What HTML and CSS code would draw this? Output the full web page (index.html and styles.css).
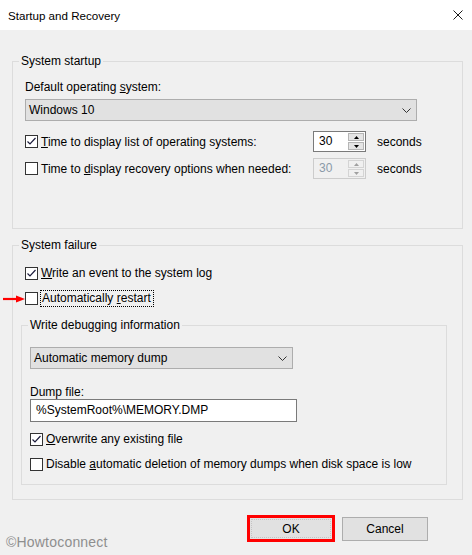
FILE: index.html
```html
<!DOCTYPE html>
<html>
<head>
<meta charset="utf-8">
<title>Startup and Recovery</title>
<link rel="stylesheet" href="styles.css">
</head>
<body>
<div class="window">
  <div class="titlebar">
    <span class="title">Startup and Recovery</span>
    <svg class="close" viewBox="0 0 10 10" width="10" height="10"><path d="M0.5 0.5L9.5 9.5M9.5 0.5L0.5 9.5" stroke="#1a1a1a" stroke-width="1"/></svg>
  </div>
  <div class="content">
    <fieldset class="group g1">
      <legend>System startup</legend>
      <div class="label">Default operating <u>s</u>ystem:</div>
      <div class="select s1">
        <span>Windows 10</span>
        <svg class="chev" viewBox="0 0 9 5" width="9" height="5"><path d="M0.5 0.5L4.5 4.5L8.5 0.5" fill="none" stroke="#333" stroke-width="1"/></svg>
      </div>
      <div class="timerow t1">
        <label class="check"><span class="box"><svg viewBox="0 0 11 11" width="11" height="11"><path d="M1.5 5.5L4 8L9.5 2" fill="none" stroke="#1c1c3c" stroke-width="1.2"/></svg></span><span><u>T</u>ime to display list of operating systems:</span></label>
        <div class="spin">
          <span class="spin-val">30</span>
          <span class="spin-btns">
            <span class="sb"><svg viewBox="0 0 5 3" width="5" height="3"><path d="M0 3L2.5 0L5 3Z" fill="#000"/></svg></span>
            <span class="sb"><svg viewBox="0 0 5 3" width="5" height="3"><path d="M0 0L2.5 3L5 0Z" fill="#000"/></svg></span>
          </span>
        </div>
        <span class="unit">seconds</span>
      </div>
      <div class="timerow t2">
        <label class="check"><span class="box"></span><span>Time to <u>d</u>isplay recovery options when needed:</span></label>
        <div class="spin disabled">
          <span class="spin-val">30</span>
          <span class="spin-btns">
            <span class="sb"><svg viewBox="0 0 5 3" width="5" height="3"><path d="M0 3L2.5 0L5 3Z" fill="#a0a0a0"/></svg></span>
            <span class="sb"><svg viewBox="0 0 5 3" width="5" height="3"><path d="M0 0L2.5 3L5 0Z" fill="#a0a0a0"/></svg></span>
          </span>
        </div>
        <span class="unit">seconds</span>
      </div>
    </fieldset>

    <fieldset class="group g2">
      <legend>System failure</legend>
      <label class="check row r1"><span class="box"><svg viewBox="0 0 11 11" width="11" height="11"><path d="M1.5 5.5L4 8L9.5 2" fill="none" stroke="#1c1c3c" stroke-width="1.2"/></svg></span><span><u>W</u>rite an event to the system log</span></label>
      <label class="check row r2"><span class="box"></span><span class="focus">Automatically <u>r</u>estart</span></label>

      <fieldset class="group g3">
        <legend>Write debugging information</legend>
        <div class="select s2">
          <span>Automatic memory dump</span>
          <svg class="chev" viewBox="0 0 9 5" width="9" height="5"><path d="M0.5 0.5L4.5 4.5L8.5 0.5" fill="none" stroke="#333" stroke-width="1"/></svg>
        </div>
        <div class="dlabel">Dump file:</div>
        <div class="input">%SystemRoot%\MEMORY.DMP</div>
        <label class="check row r3"><span class="box"><svg viewBox="0 0 11 11" width="11" height="11"><path d="M1.5 5.5L4 8L9.5 2" fill="none" stroke="#1c1c3c" stroke-width="1.2"/></svg></span><span><u>O</u>verwrite any existing file</span></label>
        <label class="check row r4"><span class="box"></span><span>Disable <u>a</u>utomatic deletion of memory dumps when disk space is low</span></label>
      </fieldset>
    </fieldset>
  </div>

  <div class="buttons">
    <button class="btn ok">OK</button>
    <button class="btn">Cancel</button>
  </div>

  <svg class="arrow" viewBox="0 0 22 8" width="22" height="8"><path d="M0 4H15" stroke="#ff0000" stroke-width="2.2"/><path d="M13 0.5L22 4L13 7.5Z" fill="#ff0000"/></svg>
  <div class="watermark">©Howtoconnect</div>
</div>
</body>
</html>
```

FILE: styles.css
```css
* { box-sizing: border-box; }

body {
  margin: 0;
  background: #f0f0f0;
  font-family: "Liberation Sans", Arial, sans-serif;
  font-size: 12px;
  color: #000;
}

.window {
  position: relative;
  width: 472px;
  height: 555px;
  overflow: hidden;
  background: #f0f0f0;
}

.titlebar {
  height: 30px;
  background: #fff;
  display: flex;
  align-items: center;
  justify-content: space-between;
  padding: 0 9px 0 8px;
}

.title { font-size: 11.6px; }

.close { display: block; margin-top: -1px; }

.content {
  padding: 23px 9px 0 12px;
}

.group {
  margin: 0;
  border: 1px solid #dcdcdc;
  min-width: 0;
}

legend {
  padding: 0 2px;
  line-height: 16px;
}

.g1 { padding: 10px 12px 49px 12px; }
.g1 > legend { margin-left: -6px; }

.g2 { margin-top: 8px; padding: 12px 15px 14px 8px; }
.g2 > legend { margin-left: -2px; }

.g3 { margin-top: 10px; padding: 14px 8px 12px 8px; }
.g3 > legend { margin-left: -2px; }

.label { line-height: 16px; }

.select {
  height: 22px;
  background: #e1e1e1;
  border: 1px solid #adadad;
  display: flex;
  align-items: center;
  justify-content: space-between;
  padding: 0 5px 0 3px;
}

.s1 { margin-top: 4px; width: 392px; }
.s2 { width: 263px; }

.chev { display: block; }

.timerow {
  display: grid;
  grid-template-columns: 288px 53px auto;
  align-items: center;
  height: 21px;
}

.t1 { margin-top: 10px; }
.t2 { margin-top: 6px; }

.check {
  display: flex;
  align-items: center;
  gap: 3px;
  line-height: 16px;
}

.box {
  width: 13px;
  height: 13px;
  flex: none;
  border: 1px solid #333;
  background: #fff;
  display: flex;
  align-items: center;
  justify-content: center;
}

.box svg { display: block; }

.spin {
  height: 21px;
  border: 1px solid #7a7a7a;
  background: #fff;
  display: flex;
}

.spin-val {
  flex: 1;
  padding-left: 5px;
  line-height: 19px;
}

.spin-btns {
  width: 18px;
  display: flex;
  flex-direction: column;
  gap: 1px;
  padding: 1px;
}

.sb {
  flex: 1;
  background: #e5e5e5;
  border: 1px solid #b5b5b5;
  display: flex;
  align-items: center;
  justify-content: center;
}

.sb svg { display: block; }

.spin.disabled {
  border-color: #cccccc;
  background: #f0f0f0;
}

.spin.disabled .spin-val { color: #8a9aa8; }

.spin.disabled .sb {
  background: #f0f0f0;
  border-color: #d4d4d4;
}

.unit { margin-left: 11px; }

.r1 { margin-left: 4px; }
.r2 { margin-left: 4px; margin-top: 9px; gap: 2px; }

.focus {
  border: 1px dotted #000;
  line-height: 15px;
  padding: 0 2px 0 1px;
}

.dlabel {
  margin-top: 16px;
  line-height: 14px;
}

.input {
  width: 267px;
  height: 23px;
  background: #fff;
  border: 1px solid #7a7a7a;
  padding-left: 5px;
  line-height: 21px;
}

.r3 { margin-top: 9px; }
.r4 { margin-top: 9px; }

.buttons {
  display: flex;
  justify-content: flex-end;
  align-items: center;
  gap: 7px;
  margin-top: 15px;
  padding-right: 44px;
}

.btn {
  width: 86px;
  height: 24px;
  background: #e1e1e1;
  border: 1px solid #adadad;
  font-family: inherit;
  font-size: 12px;
  color: #000;
  padding: 0;
}

.ok {
  width: 88px;
  height: 27px;
  border: 3px solid #ff0000;
  outline: 1px dotted #c4c4c4;
  outline-offset: -5px;
}

.arrow {
  position: absolute;
  left: 3px;
  top: 295px;
  display: block;
}

.watermark {
  position: absolute;
  left: 6px;
  top: 534px;
  font-size: 14px;
  color: #8e8e8e;
  letter-spacing: 0.2px;
}
```
